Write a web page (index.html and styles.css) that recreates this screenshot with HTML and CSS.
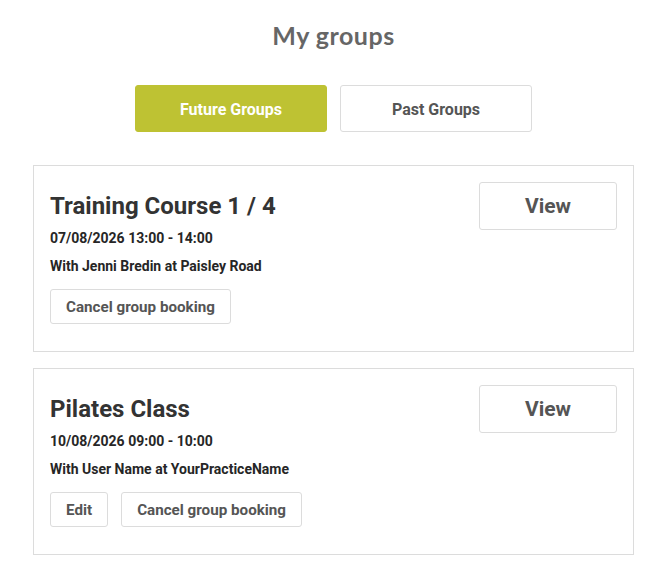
FILE: index.html
```html
<!DOCTYPE html>
<html>
<head>
<meta charset="utf-8">
<link rel="stylesheet" href="styles.css">
</head>
<body>
<main class="page">
  <h1 class="page-title">My groups</h1>
  <div class="tabs">
    <button class="tab tab-active">Future Groups</button>
    <button class="tab">Past Groups</button>
  </div>
  <section class="card">
    <div class="card-info">
      <h2 class="card-title">Training Course 1 / 4</h2>
      <p class="card-date">07/08/2026 13:00 - 14:00</p>
      <p class="card-with">With Jenni Bredin at Paisley Road</p>
      <div class="card-actions">
        <button class="btn">Cancel group booking</button>
      </div>
    </div>
    <button class="btn-view">View</button>
  </section>
  <section class="card">
    <div class="card-info">
      <h2 class="card-title">Pilates Class</h2>
      <p class="card-date">10/08/2026 09:00 - 10:00</p>
      <p class="card-with">With User Name at YourPracticeName</p>
      <div class="card-actions">
        <button class="btn">Edit</button>
        <button class="btn">Cancel group booking</button>
      </div>
    </div>
    <button class="btn-view">View</button>
  </section>
</main>
</body>
</html>
```
FILE: styles.css
```css
* { box-sizing: border-box; }
html, body { margin: 0; padding: 0; background: #fff; }
body { font-family: Roboto, "Liberation Sans", sans-serif; color: #333; }
.page { padding: 20px 36px 0 33px; display: flex; flex-direction: column; }
.page-title {
  margin: 0;
  text-align: center;
  font-family: Lato, "Noto Sans", sans-serif;
  font-weight: 700;
  font-size: 25px;
  line-height: 30px;
  color: #666;
  letter-spacing: 0.5px;
}
.tabs { display: flex; justify-content: center; gap: 13px; margin-top: 35px; margin-bottom: 33px; }
.tab {
  width: 192px; height: 47px;
  border: 1px solid #dcdcdc; border-radius: 3px;
  background: #fff; color: #555;
  font-family: Roboto, sans-serif; font-weight: 700; font-size: 16px;
  padding-top: 2px;
}
.tab-active { background: #bec233; border-color: #bec233; color: #fff; }
.card {
  border: 1px solid #dcdcdc;
  display: flex; justify-content: space-between; align-items: flex-start;
  padding: 16px 16px 27px 16px;
  margin-bottom: 16px;
}
.card-info { display: flex; flex-direction: column; padding-top: 10px; }
.card-title { margin: 0; font-size: 24px; line-height: 28px; font-weight: 700; color: #333; }
.card-date { margin: 9px 0 0; font-size: 14px; line-height: 18px; font-weight: 700; color: #262626; }
.card-with { margin: 10px 0 0; font-size: 14px; line-height: 18px; font-weight: 700; color: #262626; }
.card-actions { display: flex; gap: 13px; margin-top: 14px; }
.btn {
  height: 35px; padding: 0 15px;
  border: 1px solid #dcdcdc; border-radius: 3px; background: #fff;
  font-family: Roboto, sans-serif; font-weight: 700; font-size: 15.2px; color: #555;
}
.btn-view {
  width: 138px; height: 48px;
  border: 1px solid #dcdcdc; border-radius: 3px; background: #fff;
  font-family: Roboto, sans-serif; font-weight: 700; font-size: 21px; color: #555;
}
```
